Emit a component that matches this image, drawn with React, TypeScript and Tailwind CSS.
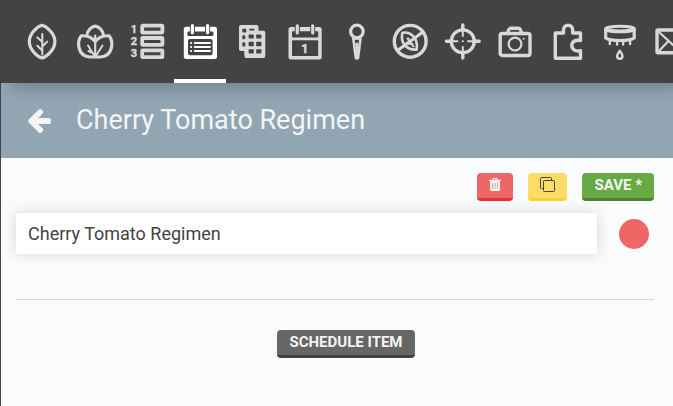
import React, { useState } from "react";

const LeafIcon = () => (
  <>
    <path d="M18 1.200C14.500 2 5.300 8.500 5.300 17.500S14.500 33.200 18 34c3.500-.8 12.900-7.500 12.900-16.500S21.500 2 18 1.200z" strokeWidth="3.2" />
    <path d="M18.3 10v20.5M13.4 13.4l4.7 4.4M23.2 17.6l-4.7 4.7M13.4 21.8l4.7 4.7" strokeWidth="2" />
  </>
);

const CropsIcon = () => (
  <>
    <path d="M9.800 11.500C10.400 6.500 14.500 2.400 18.200 2.100c3.700.3 7.800 4.400 8.400 9.400" strokeWidth="3.2" />
    <path d="M18.200 17.500C14.500 13 9 11.500 4.300 11.800 -0.200 17.500 0.200 32.200 13 33h10.400C36.200 32.200 36.600 17.500 32.100 11.800c-4.700-.3-10.200 1.200-13.900 5.700z" strokeWidth="3.200" />
    <path d="M18.200 11.500V33" strokeWidth="2.200" />
    <path d="M11 21.500l6.500 10.500M25.500 21.500L18.800 32M11.500 27l3 1.500" strokeWidth="2" />
  </>
);

const SequencesIcon = () => (
  <>
    <rect x="13.200" y="1.700" width="20.200" height="6.900" rx="0.500" strokeWidth="3.800" />
    <rect x="13.200" y="14" width="20.200" height="6.900" rx="0.500" strokeWidth="3.800" />
    <rect x="13.200" y="26.300" width="20.200" height="6.900" rx="0.500" strokeWidth="3.800" />
    <g fill="currentColor" stroke="currentColor" strokeWidth="0.4" fontSize="11" fontWeight="700" textAnchor="middle">
      <text x="5" y="9">1</text>
      <text x="5" y="21">2</text>
      <text x="5" y="33">3</text>
    </g>
  </>
);

const RegimensIcon = () => (
  <>
    <rect x="1.800" y="2.700" width="33.200" height="32.300" rx="2.500" fill="currentColor" stroke="none" />
    <g fill="#434343" stroke="none">
      <rect x="5.400" y="7.500" width="26" height="4.500" rx="1" />
      <rect x="6" y="15" width="24.600" height="16.200" rx="2" />
    </g>
    <path d="M10.400 2v6.500M25.600 2v6.500" stroke="#434343" strokeWidth="5" />
    <path d="M10.400 1.700v7M25.600 1.700v7" strokeWidth="3.200" />
    <path d="M9 19h.2M9 23h.2M9 27h.2M12.800 19H28M12.800 23H28M12.800 27H28" strokeWidth="2" />
  </>
);

const PlantsGridIcon = () => (
  <>
    <path fill="currentColor" stroke="none" d="M7 1h15.500a2 2 0 0 1 2 2v3.700h4.800a2 2 0 0 1 2 2V32a2 2 0 0 1-2 2h-17a2 2 0 0 1-2-2v-5H7a2 2 0 0 1-2-2V3a2 2 0 0 1 2-2z" />
    <g fill="#434343" stroke="none">
      <rect x="8.300" y="4.800" width="4" height="3.800" rx="1" />
      <rect x="15" y="4.800" width="5.600" height="1.800" rx="0.800" />
      <rect x="8.300" y="11.300" width="3" height="4" rx="1" />
      <rect x="8.300" y="18.300" width="3" height="4.300" rx="1" />
      <rect x="14.600" y="10.400" width="5.200" height="4.200" rx="0.800" />
      <rect x="22.200" y="10.400" width="5.200" height="4.200" rx="0.800" />
      <rect x="14.600" y="17.700" width="5.200" height="4.600" rx="0.800" />
      <rect x="22.200" y="17.700" width="5.200" height="4.600" rx="0.800" />
      <rect x="14.600" y="25.300" width="5.200" height="4.200" rx="0.800" />
      <rect x="22.200" y="25.300" width="5.200" height="4.200" rx="0.800" />
    </g>
  </>
);

const CalendarIcon = () => (
  <>
    <rect x="1.500" y="3" width="33.200" height="32.500" rx="2.500" fill="currentColor" stroke="none" />
    <g fill="#434343" stroke="none">
      <rect x="5" y="7.300" width="26.200" height="6.200" rx="1" />
      <rect x="5" y="16.200" width="26.200" height="15.800" rx="1" />
    </g>
    <path d="M10.300 2v6.500M25.700 2v6.500" stroke="#434343" strokeWidth="5" />
    <path d="M10.300 1.900v7M25.700 1.900v7" strokeWidth="3.200" />
    <text x="17.800" y="29" fill="currentColor" stroke="currentColor" strokeWidth="0.4" fontSize="13" fontWeight="700" textAnchor="middle">1</text>
  </>
);

const PinIcon = () => (
  <>
    <circle cx="17.900" cy="7.500" r="6.300" strokeWidth="3.200" />
    <path d="M14.300 14.500l2.400 18.800a1.200 1.200 0 0 0 2.400 0l2.400-18.800z" strokeWidth="2.600" />
    <path d="M17.900 20v12" strokeWidth="3" />
  </>
);

const WeedIcon = () => (
  <>
    <circle cx="18.200" cy="17.300" r="15.900" strokeWidth="3.400" />
    <path d="M10.400 8.800C17 7.500 26.500 12 24.700 25.600 13.500 26.200 8.200 18 10.400 8.800z" strokeWidth="2.600" />
    <path d="M15.500 14.500l6 8M16.500 14.500v4M14.500 19.500l6 .5" strokeWidth="2" />
    <path d="M5.500 26.500L30.500 8.300" strokeWidth="3" />
  </>
);

const ControlsIcon = () => (
  <>
    <circle cx="17.800" cy="17.300" r="11.500" strokeWidth="3.300" />
    <path d="M17.800 1v5M17.800 29v5M1.500 17.300h5M29.200 17.300h5" strokeWidth="3.400" />
    <path d="M17.800 7v5M17.800 23v5M7.500 17.300h5M23 17.300h5M17.700 17.300h.2" strokeWidth="2" />
  </>
);

const CameraIcon = () => (
  <>
    <rect x="3.200" y="9.500" width="29.800" height="22" rx="2" strokeWidth="3.400" />
    <path d="M10.800 9.500c.3-3.500 1.200-5.200 3-5.200h7.600c1.800 0 2.700 1.700 3 5.200" strokeWidth="3.400" />
    <circle cx="18" cy="20" r="6.400" strokeWidth="2.200" />
    <path d="M26.600 14.700h.1" strokeWidth="2" />
  </>
);

const PuzzleIcon = () => (
  <path d="M5.300 9h8.200V5.800a4.600 4.600 0 0 1 9.200 0V9h7.800V16.500C25 15.400 21.800 18 21.800 21.500s3.200 6.300 8.700 5.200v7.600H5.300z" strokeWidth="3.400" />
);

const WaterIcon = () => (
  <>
    <ellipse cx="18" cy="4.600" rx="14.200" ry="2.300" strokeWidth="3" />
    <path d="M3.700 5v9C8 17.300 28 17.300 32.200 14V5" strokeWidth="3.200" />
    <path d="M4 6c6 2.400 22 2.400 28 0" strokeWidth="3" />
    <path d="M7.800 16v4M15.100 16v4.500M21.100 16v4.500M28.100 16v4" strokeWidth="2.400" />
    <path d="M17.800 26.800c-1.600 2.400-2.700 3.600-2.700 5.200a2.700 2.700 0 0 0 5.400 0c0-1.600-1.100-2.800-2.700-5.200z" strokeWidth="2.400" />
  </>
);

const MessagesIcon = () => (
  <>
    <rect x="2" y="6" width="32" height="22.700" rx="1" strokeWidth="3.400" />
    <path d="M4 8l14 13L32 8M4 27l8.500-9M32 27l-8.500-9" strokeWidth="2.200" />
  </>
);

const TABS = [
  { label: "Plants", Icon: LeafIcon },
  { label: "Groups", Icon: CropsIcon },
  { label: "Sequences", Icon: SequencesIcon },
  { label: "Regimens", Icon: RegimensIcon },
  { label: "Garden beds", Icon: PlantsGridIcon },
  { label: "Events", Icon: CalendarIcon },
  { label: "Points", Icon: PinIcon },
  { label: "Weeds", Icon: WeedIcon },
  { label: "Controls", Icon: ControlsIcon },
  { label: "Photos", Icon: CameraIcon },
  { label: "Farmware", Icon: PuzzleIcon },
  { label: "Tools", Icon: WaterIcon },
  { label: "Messages", Icon: MessagesIcon },
];

const BUTTON =
  "flex h-7 items-center justify-center rounded border-b-3 px-3 pb-0.5 text-[15px] leading-5 font-bold";

function NavBar() {
  return (
    <nav className="relative z-10 overflow-hidden bg-[#434343] pl-[15px] shadow-[10px_4px_14px_rgba(0,0,0,0.24)]">
      <div className="grid w-[683px] grid-cols-13">
        {TABS.map(({ label, Icon }) => {
          const active = label === "Regimens";
          return (
            <a
              key={label}
              href="#"
              aria-label={label}
              aria-current={active ? "page" : undefined}
              className={
                "flex justify-center border-b-4 pt-6 pb-[19px] " +
                (active ? "border-white text-white" : "border-transparent text-[#d9d9d9]")
              }
            >
              <svg
                viewBox="0 0 36 36"
                className="size-9 overflow-visible"
                fill="none"
                stroke="currentColor"
                strokeLinecap="round"
                strokeLinejoin="round"
                aria-hidden="true"
              >
                <Icon />
              </svg>
            </a>
          );
        })}
      </div>
    </nav>
  );
}

export default function App() {
  const [name, setName] = useState("Cherry Tomato Regimen");

  return (
    <div className="min-h-screen border-l border-[#434343] bg-[#fafbfd] font-[Roboto,sans-serif] text-[#434343]">
      <NavBar />

      <header className="flex h-[75px] items-center gap-[25px] bg-[#92a5b3] pl-[27px] text-[#f4f4f4]">
        <button type="button" aria-label="Back">
          <svg viewBox="64 -75 1472 1558" className="h-6 w-[23px]" fill="currentColor" aria-hidden="true">
            <path d="M1536 640v128q0 53-32.500 90.500T1419 896H715l293 294q38 36 38 90t-38 90l-75 76q-37 37-90 37-52 0-91-37L101 794q-37-37-37-90 0-52 37-91L752-37q38-38 91-38 52 0 90 38l75 74q38 38 38 91t-38 91L715 512h704q52 0 84.500 37.500T1536 640z" />
          </svg>
        </button>
        <h1 className="pb-0.5 text-[27px] leading-8">Cherry Tomato Regimen</h1>
      </header>

      <main className="pt-[15px] pr-[19px] pl-[15px]">
        <div className="flex justify-end gap-[15px]">
          <button type="button" aria-label="Delete" className={BUTTON + " border-[#e63232] bg-[#ee6666] text-[#f4f4f4]"}>
            <svg viewBox="0 0 12 13" className="h-[13px] w-3" fill="currentColor" aria-hidden="true">
              <path fillRule="evenodd" d="M4 0h4l1 1.800h3V3H0V1.800h3zM4.600 1l-.4.800h3.600L7.400 1zM1 3h10v8.500a1.500 1.500 0 0 1-1.500 1.500h-7A1.500 1.500 0 0 1 1 11.500z" />
              <path d="M3.500 5v5.500M6 5v5.500M8.500 5v5.500" stroke="#ee6666" strokeWidth="0.700" />
            </svg>
          </button>
          <button type="button" aria-label="Copy" className={BUTTON + " border-[#fdd02f] bg-[#ffdc66] text-[#434343]"}>
            <svg viewBox="0 0 15 15" className="size-[15px]" fill="none" stroke="currentColor" aria-hidden="true">
              <path d="M3.500 11.500h-2a1 1 0 0 1-1-1v-9a1 1 0 0 1 1-1h9a1 1 0 0 1 1 1v2" />
              <rect x="3.500" y="3.500" width="11" height="11" rx="1" />
            </svg>
          </button>
          <button type="button" className={BUTTON + " border-[#4c8032] bg-[#66aa44] text-[#f4f4f4]"}>
            SAVE *
          </button>
        </div>

        <div className="mt-3 flex items-center gap-[22px] pr-[5px]">
          <input
            type="text"
            aria-label="Regimen name"
            value={name}
            onChange={(e) => setName(e.target.value)}
            className="h-[41px] min-w-0 flex-1 bg-white px-3 text-[18px] shadow-[0_0_15px_rgba(0,0,0,0.15)] outline-none"
          />
          <button type="button" aria-label="Color" className="size-[30px] rounded-full bg-[#ee6666]" />
        </div>

        <hr className="mt-[45px] border-[#d3d6d8]" />

        <div className="mt-[30px] flex justify-center pl-[22px]">
          <button type="button" className={BUTTON + " border-[#434343] bg-[#666666] text-[#f4f4f4]"}>
            SCHEDULE ITEM
          </button>
        </div>
      </main>
    </div>
  );
}
